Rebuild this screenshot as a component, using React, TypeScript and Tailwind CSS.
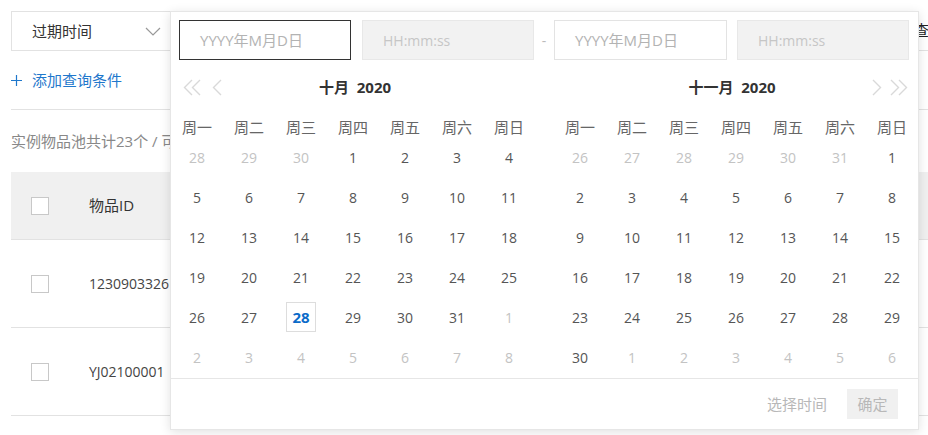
import React from "react";

const weekDays = ["周一", "周二", "周三", "周四", "周五", "周六", "周日"];

type Cell = { d: number; muted: boolean; today?: boolean };

// build a 6x7 grid: leading days of previous month, the month, then trailing days
function buildMonth(prevTail: number[], days: number, todayDay?: number): Cell[] {
  const cells: Cell[] = prevTail.map((d) => ({ d, muted: true }));
  for (let i = 1; i <= days; i++) cells.push({ d: i, muted: false, today: i === todayDay });
  let n = 1;
  while (cells.length < 42) cells.push({ d: n++, muted: true });
  return cells;
}

const october = buildMonth([28, 29, 30], 31, 28);
const november = buildMonth([26, 27, 28, 29, 30, 31], 30);

function Chevron({ dir, double }: { dir: "left" | "right"; double?: boolean }) {
  const single = dir === "left" ? "M9 1 L1.5 8.5 L9 16" : "M1 1 L8.5 8.5 L1 16";
  return (
    <svg width={double ? 18 : 10} height="17" viewBox={double ? "0 0 18 17" : "0 0 10 17"} fill="none">
      <path d={single} stroke="#d9d9d9" strokeWidth="1.4" />
      {double && (
        <path d={dir === "left" ? "M17 1 L9.5 8.5 L17 16" : "M9 1 L16.5 8.5 L9 16"} stroke="#d9d9d9" strokeWidth="1.4" />
      )}
    </svg>
  );
}

function DateInput({ focused }: { focused?: boolean }) {
  return (
    <div
      className={`h-[40px] flex items-center pl-5 text-[15px] text-[#b3b3b3] bg-white border ${
        focused ? "border-[#333]" : "border-[#e3e3e3]"
      }`}
    >
      YYYY年M月D日
    </div>
  );
}

function TimeInput() {
  return (
    <div className="h-[40px] flex items-center pl-5 text-[14px] text-[#c6c6c6] bg-[#f2f2f2] border border-[#e8e8e8]">
      HH:mm:ss
    </div>
  );
}

function Calendar({ title, cells, side }: { title: string; cells: Cell[]; side: "left" | "right" }) {
  return (
    <div className="w-[364px] flex flex-col">
      <div className="h-[54px] relative flex items-center justify-center">
        {side === "left" && (
          <div className="absolute left-[12px] top-[19px] flex items-center gap-[11px]">
            <Chevron dir="left" double />
            <Chevron dir="left" />
          </div>
        )}
        <span className={`text-[15px] font-bold text-[#333] whitespace-pre ${side === "left" ? "pl-[4px]" : "pr-[8px]"}`}>
          {title}
        </span>
        {side === "right" && (
          <div className="absolute right-[10px] top-[19px] flex items-center gap-[8px]">
            <Chevron dir="right" />
            <Chevron dir="right" double />
          </div>
        )}
      </div>
      <div className="grid grid-cols-7 h-[23px] items-end">
        {weekDays.map((w) => (
          <div key={w} className="text-center text-[15px] leading-[20px] text-[#666]">
            {w}
          </div>
        ))}
      </div>
      <div className="grid grid-cols-7">
        {cells.map((c, i) => (
          <div key={i} className="h-[40px] flex items-center justify-center">
            {c.today ? (
              <span className="w-[30px] h-[30px] flex items-center justify-center border border-[#ddd] text-[15px] font-bold text-[#0b6bc9]">
                {c.d}
              </span>
            ) : (
              <span className={`text-[14px] ${c.muted ? "text-[#c3c3c3]" : "text-[#555]"}`}>{c.d}</span>
            )}
          </div>
        ))}
      </div>
    </div>
  );
}

function Checkbox() {
  return <span className="block w-[18px] h-[18px] border border-[#c8c8c8] bg-white" />;
}

export default function App() {
  return (
    <div
      className="relative w-[928px] h-[435px] overflow-hidden bg-white text-[#333]"
      style={{ fontFamily: '"Open Sans", "Noto Sans CJK SC", sans-serif' }}
    >
      {/* Filter bar */}
      <div className="pl-[11px] pt-[11px]">
        <div className="flex items-center">
          <div className="w-[160px] h-[40px] border border-[#e2e2e2] flex items-center justify-between pl-5 pr-[9px]">
            <span className="text-[15px] text-[#333]">过期时间</span>
            <svg width="16" height="9" viewBox="0 0 16 9" fill="none">
              <path d="M1 1 L8 8 L15 1" stroke="#999" strokeWidth="1.2" />
            </svg>
          </div>
          <div className="ml-auto w-[40px] h-[40px] border-b border-[#e2e2e2] flex items-center pl-[26px] text-[15px] text-[#222] whitespace-nowrap">
            查询
          </div>
        </div>
        <div className="h-[58px] flex items-center gap-[10px] text-[15px] text-[#1f78cc]">
          <svg width="11" height="11" viewBox="0 0 11 11" fill="none">
            <path d="M5.5 0 V11 M0 5.5 H11" stroke="#1f78cc" strokeWidth="1.2" />
          </svg>
          添加查询条件
        </div>
        <div className="border-t border-[#e2e2e2] h-[63px] flex items-center text-[15px] text-[#888]">
          实例物品池共计23个 / 可用物品共计20个
        </div>

        {/* Item table */}
        <div className="flex flex-col text-[14px]">
          <div className="h-[68px] bg-[#f0f0f0] flex items-center border-b border-[#e2e2e2]">
            <div className="w-[78px] pl-[20px]">
              <Checkbox />
            </div>
            <span className="text-[15px] text-[#333]">物品ID</span>
          </div>
          {["1230903326", "YJ02100001"].map((id) => (
            <div key={id} className="h-[88px] flex items-center border-b border-[#e2e2e2]">
              <div className="w-[78px] pl-[20px]">
                <Checkbox />
              </div>
              <span className="text-[#444]">{id}</span>
            </div>
          ))}
        </div>
      </div>

      {/* Date range picker dropdown */}
      <div className="absolute left-[170px] top-[11px] w-[749px] h-[419px] bg-white border border-[#e6e6e6] shadow-[0_2px_10px_rgba(0,0,0,0.12)] flex flex-col">
        <div className="flex items-center pt-[8px] pl-[8px]">
          <div className="w-[172px]">
            <DateInput focused />
          </div>
          <div className="w-[172px] ml-[11px]">
            <TimeInput />
          </div>
          <div className="w-[20px] text-center text-[14px] text-[#bbb]">-</div>
          <div className="w-[173px]">
            <DateInput />
          </div>
          <div className="w-[172px] ml-[10px]">
            <TimeInput />
          </div>
        </div>
        <div className="flex gap-[19px]">
          <Calendar title="十月  2020" cells={october} side="left" />
          <Calendar title="十一月  2020" cells={november} side="right" />
        </div>
        <div className="mt-[1px] flex-1 border-t border-[#e6e6e6] flex items-center justify-end gap-[20px] pr-[20px]">
          <span className="text-[15px] text-[#b8b8b8]">选择时间</span>
          <span className="w-[51px] h-[30px] flex items-center justify-center bg-[#f0f0f0] text-[15px] text-[#b8b8b8]">
            确定
          </span>
        </div>
      </div>
    </div>
  );
}
